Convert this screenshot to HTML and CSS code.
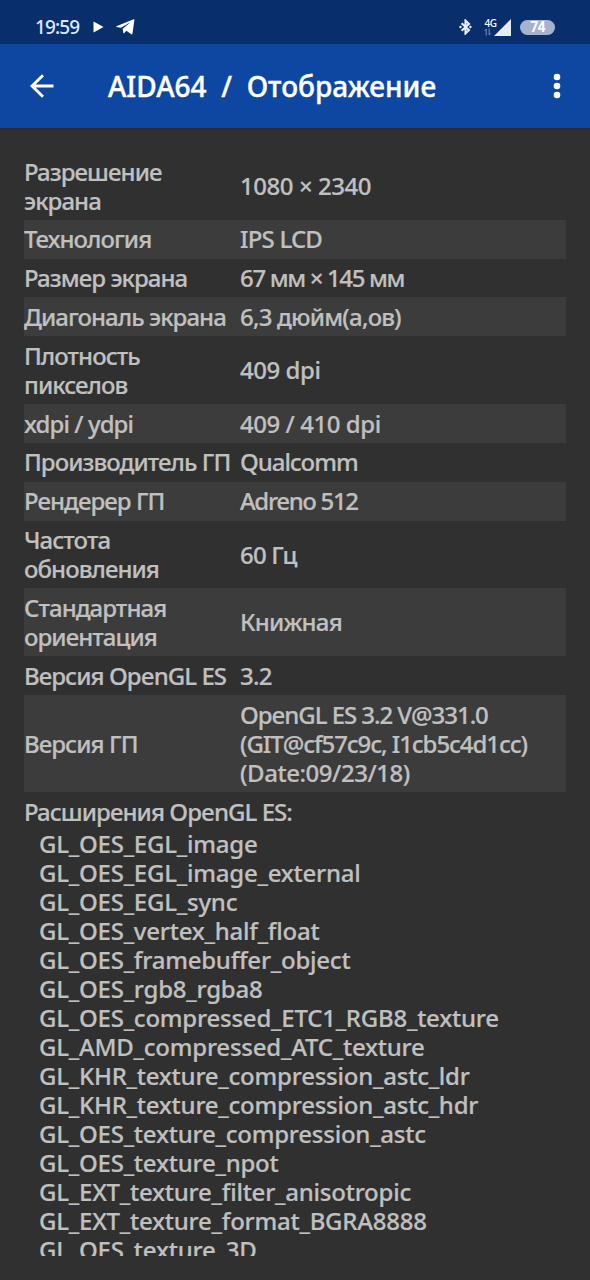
FILE: index.html
```html
<!DOCTYPE html>
<html lang="ru">
<head>
    <meta charset="UTF-8">
    <meta name="viewport" content="width=device-width, initial-scale=1.0">
    <title>AIDA64</title>
    <link rel="stylesheet" href="styles.css">
</head>
<body>
    <div class="status-bar">
        <span class="clock">19:59</span>
        <svg class="icon-play" width="11" height="12" viewBox="0 0 11 12"><path d="M0.5 0.5L10.5 6L0.5 11.5Z" fill="#fff"/></svg>
        <svg class="icon-telegram" width="19" height="16" viewBox="0 0 19 16"><path d="M0.4 7.2L17.6 0.3Q18.6 0 18.4 1L16.5 14.5Q16.2 15.9 15 15.1L10.4 11.8L8 14.2Q7.3 14.6 7.2 13.6L6.7 9.8L14.8 3L4.9 8.7L0.5 7.9Q-0.2 7.6 0.4 7.2Z" fill="#fff"/></svg>
        <div class="status-right">
            <svg class="icon-bluetooth" width="13" height="16" viewBox="0 0 13 16"><path d="M2.6 4.2L10 11L6.5 14.4V1.6L10 5L2.6 11.8" fill="none" stroke="#e8eefa" stroke-width="2.1"/><circle cx="1.5" cy="8" r="1.2" fill="#e8eefa"/><circle cx="11.4" cy="8" r="1.2" fill="#e8eefa"/></svg>
            <div class="network">
                <span class="network-type">4G</span>
                <svg width="8" height="8" viewBox="0 0 8 8"><path d="M2.2 7.5V1M0.6 2.6L2.2 1M5.2 0.5V7M5.2 7L6.8 5.4" fill="none" stroke="#7f92bd" stroke-width="1"/></svg>
            </div>
            <svg class="icon-signal" width="17" height="17" viewBox="0 0 17 17"><path d="M17 0V17H0Z" fill="#e7ebf3"/></svg>
            <span class="battery">74</span>
        </div>
    </div>

    <div class="toolbar">
        <svg class="icon-back" width="24" height="24" viewBox="0 0 24 24"><path d="M23.5 12H2M13 1.2L2 12L13 22.8" fill="none" stroke="#fff" stroke-width="2.9"/></svg>
        <h1>AIDA64&nbsp; /&nbsp; Отображение</h1>
        <svg class="icon-menu" width="8" height="26" viewBox="0 0 8 26"><g fill="#fff"><circle cx="4" cy="4" r="3.3"/><circle cx="4" cy="13" r="3.3"/><circle cx="4" cy="22" r="3.3"/></g></svg>
    </div>

    <div class="content">
        <div class="row"><div class="label">Разрешение<br>экрана</div><div class="value loose">1080 × 2340</div></div>
        <div class="row"><div class="label">Технология</div><div class="value">IPS LCD</div></div>
        <div class="row"><div class="label">Размер экрана</div><div class="value tighter">67 мм × 145 мм</div></div>
        <div class="row"><div class="label">Диагональ экрана</div><div class="value">6,3 дюйм(а,ов)</div></div>
        <div class="row"><div class="label">Плотность<br>пикселов</div><div class="value loose">409 dpi</div></div>
        <div class="row"><div class="label">xdpi / ydpi</div><div class="value loose">409 / 410 dpi</div></div>
        <div class="row"><div class="label">Производитель ГП</div><div class="value tight">Qualcomm</div></div>
        <div class="row"><div class="label">Рендерер ГП</div><div class="value tighter">Adreno 512</div></div>
        <div class="row"><div class="label">Частота<br>обновления</div><div class="value">60 Гц</div></div>
        <div class="row"><div class="label">Стандартная<br>ориентация</div><div class="value">Книжная</div></div>
        <div class="row"><div class="label">Версия OpenGL ES</div><div class="value">3.2</div></div>
        <div class="row"><div class="label">Версия ГП</div><div class="value tight">OpenGL ES 3.2 V@331.0<br>(GIT@cf57c9c, I1cb5c4d1cc)<br><span class="loose">(Date:09/23/18)</span></div></div>

        <h2>Расширения OpenGL ES:</h2>
        <ul class="extensions">
            <li>GL_OES_EGL_image</li>
            <li>GL_OES_EGL_image_external</li>
            <li>GL_OES_EGL_sync</li>
            <li>GL_OES_vertex_half_float</li>
            <li>GL_OES_framebuffer_object</li>
            <li>GL_OES_rgb8_rgba8</li>
            <li>GL_OES_compressed_ETC1_RGB8_texture</li>
            <li>GL_AMD_compressed_ATC_texture</li>
            <li>GL_KHR_texture_compression_astc_ldr</li>
            <li>GL_KHR_texture_compression_astc_hdr</li>
            <li>GL_OES_texture_compression_astc</li>
            <li>GL_OES_texture_npot</li>
            <li>GL_EXT_texture_filter_anisotropic</li>
            <li>GL_EXT_texture_format_BGRA8888</li>
            <li>GL_OES_texture_3D</li>
        </ul>
    </div>
</body>
</html>
```
FILE: styles.css
```css
* {
    box-sizing: border-box;
}

body {
    margin: 0;
    height: 1280px;
    overflow: hidden;
    font-family: "Noto Sans", sans-serif;
    font-weight: 500;
    background-color: #303030;
    color: #c0c0c0;
}

svg {
    display: block;
    flex: none;
}

.status-bar {
    display: flex;
    align-items: center;
    height: 44px;
    padding: 10px 35px 0 35px;
    background-color: #082f6b;
}

.clock {
    width: 58px;
    font-size: 19px;
    letter-spacing: -0.9px;
    color: #dfe8fb;
}

.icon-telegram {
    margin-left: 12px;
}

.status-right {
    display: flex;
    align-items: center;
    margin-left: auto;
}

.network {
    margin: 0 -3px 0 12px;
    width: 13px;
}

.network-type {
    display: block;
    font-size: 10px;
    line-height: 9px;
    letter-spacing: -0.5px;
    text-align: center;
    color: #fff;
}

.battery {
    width: 35px;
    height: 15px;
    margin-left: 9px;
    border-radius: 8px;
    background-color: #a5b3d0;
    color: #fff;
    font-family: Roboto, sans-serif;
    font-size: 14px;
    font-weight: 700;
    line-height: 15px;
    letter-spacing: -0.8px;
    text-align: center;
}

.toolbar {
    display: flex;
    align-items: center;
    height: 84px;
    padding: 0 29px 0 30px;
    background-color: #0d47a1;
    box-shadow: 0 1px 1px #262a36;
}

h1 {
    margin: 0 0 0 54px;
    font-size: 28px;
    font-weight: 500;
    line-height: 40px;
    letter-spacing: 0.02px;
    color: #fff;
    white-space: nowrap;
    -webkit-text-stroke: 0.4px;
}

.icon-menu {
    margin-left: auto;
}

.content {
    height: 1128px;
    padding: 24px 24px 0;
    overflow: hidden;
    font-size: 24px;
    line-height: 29px;
    -webkit-text-stroke: 0.2px;
}

.row {
    display: flex;
    align-items: center;
    padding: 4.5px 0 5.334px;
    white-space: nowrap;
}

.row:nth-child(even) {
    background-color: #3c3c3c;
}

.label {
    width: 216px;
    flex: none;
    letter-spacing: -0.94px;
}

.value {
    letter-spacing: -0.8px;
}

.tight {
    letter-spacing: -1.05px;
}

.tighter {
    letter-spacing: -1.35px;
}

.loose {
    letter-spacing: -0.45px;
}

h2 {
    margin: 0;
    padding: 5px 0 3px;
    font-size: 24px;
    font-weight: 500;
    letter-spacing: -0.95px;
}

.extensions {
    margin: 0;
    padding: 0 0 0 15px;
    list-style: none;
    letter-spacing: -0.23px;
}
```
